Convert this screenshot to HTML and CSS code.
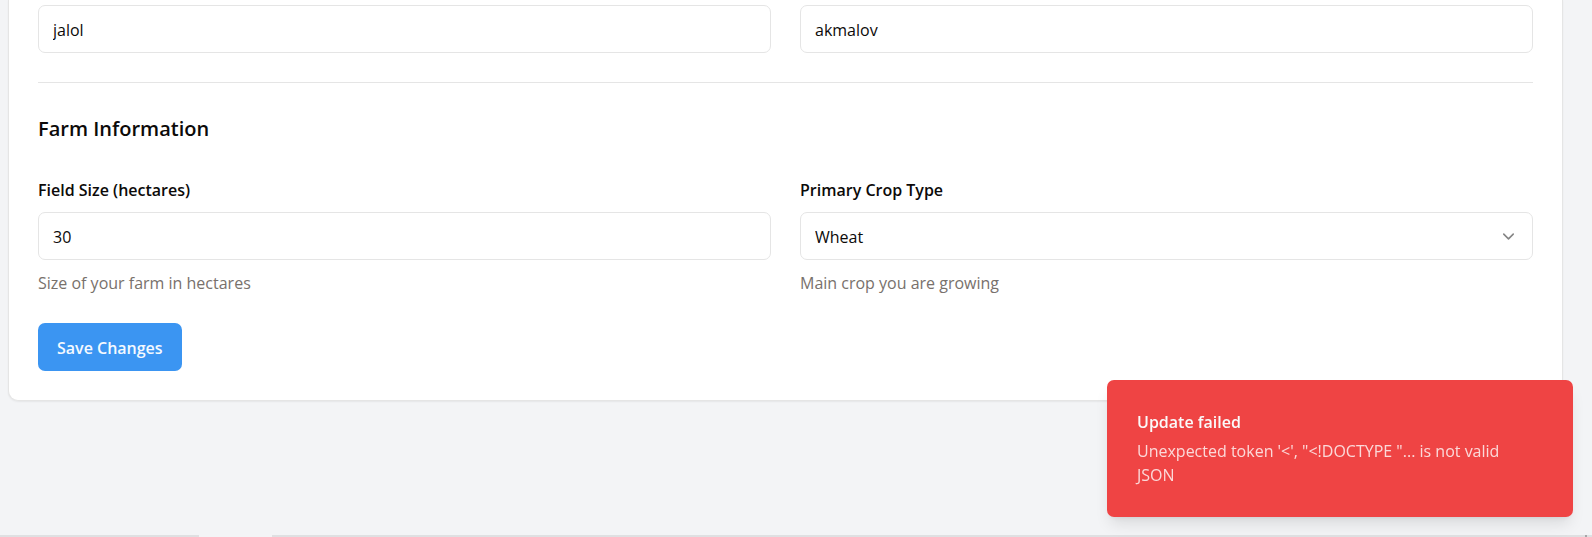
FILE: index.html
```html
<!DOCTYPE html>
<html lang="en">
<head>
<meta charset="utf-8">
<meta name="viewport" content="width=device-width, initial-scale=1">
<title>Profile settings</title>
<link rel="stylesheet" href="styles.css">
</head>
<body>
<main class="page">
  <form class="card">
    <div class="grid">
      <input class="control" type="text" value="jalol" aria-label="First name">
      <input class="control" type="text" value="akmalov" aria-label="Last name">
    </div>
    <hr class="divider">
    <h2 class="heading">Farm Information</h2>
    <div class="grid">
      <div class="field">
        <label class="label" for="size">Field Size (hectares)</label>
        <input class="control" id="size" type="text" inputmode="numeric" value="30" aria-describedby="size-help">
        <p class="help" id="size-help">Size of your farm in hectares</p>
      </div>
      <div class="field">
        <label class="label" for="crop">Primary Crop Type</label>
        <div class="select">
          <select class="control" id="crop" aria-describedby="crop-help"><option>Wheat</option></select>
          <svg class="chevron" viewBox="0 0 24 24" aria-hidden="true"><path d="m6 9 6 6 6-6"/></svg>
        </div>
        <p class="help" id="crop-help">Main crop you are growing</p>
      </div>
    </div>
    <button class="save" type="button">Save Changes</button>
  </form>
</main>
<div class="strip"><span class="strip-start"></span><span class="strip-end"></span><span class="strip-mark"></span><span class="strip-tail"></span></div>
<div class="toast" role="alert">
  <div class="toast-title">Update failed</div>
  <div class="toast-text">Unexpected token '&lt;', "&lt;!DOCTYPE "... is not valid JSON</div>
</div>
</body>
</html>
```

FILE: styles.css
```css
* { box-sizing: border-box; }

body {
  display: flex;
  flex-direction: column;
  min-height: 100vh;
  margin: 0;
  background: #f3f4f6;
  color: #0c0a09;
  font: 16px/24px "Segoe UI", "Open Sans", "Noto Sans", sans-serif;
}

.page { padding: 0 29px 0 8px; }

.card {
  padding: 5px 29px 29px;
  background: #fff;
  border: 1px solid #e5e5e5;
  border-top: 0;
  border-radius: 0 0 10px 10px;
  box-shadow: 0 1px 2px rgb(0 0 0 / 6%);
}

.grid {
  display: grid;
  grid-template-columns: 1fr 1fr;
  gap: 29px;
}

.control {
  display: block;
  width: 100%;
  height: 48px;
  padding: 2px 14px 0;
  border: 1px solid #e5e5e5;
  border-radius: 7px;
  background: #fff;
  color: inherit;
  font: inherit;
  appearance: none;
}

.divider {
  height: 1px;
  margin: 29px 0;
  border: 0;
  background: #e5e5e5;
}

.heading {
  margin: 0 0 32px;
  font-size: 20px;
  font-weight: 600;
  line-height: 34px;
}

.label {
  display: block;
  margin-bottom: 10px;
  font-weight: 600;
}

.help {
  margin: 11px 0 0;
  color: #78716c;
}

.select { position: relative; }

.chevron {
  position: absolute;
  top: 15px;
  right: 15px;
  width: 19px;
  height: 19px;
  fill: none;
  stroke: #858585;
  stroke-width: 2;
  stroke-linecap: round;
  stroke-linejoin: round;
  pointer-events: none;
}

.save {
  height: 48px;
  margin-top: 28px;
  padding: 2px 19px 0;
  border: 0;
  border-radius: 7px;
  background: #3b95f2;
  color: #f4f9ff;
  font: inherit;
  font-weight: 600;
}

.strip {
  display: flex;
  height: 2px;
  margin-top: auto;
}

.strip-start { width: 199px; background: #dfe0e2; }
.strip-end { flex: 1; margin-left: 73px; background: #dfe0e2; }
.strip-mark { width: 2px; background: #a5a6a8; }
.strip-tail { width: 5px; background: #dfe0e2; }

.toast {
  position: fixed;
  right: 19px;
  bottom: 20px;
  width: 466px;
  padding: 30px 48px 30px 30px;
  border-radius: 7px;
  background: #ef4444;
  color: #fafafa;
  box-shadow: 0 10px 15px -3px rgb(0 0 0 / 10%), 0 4px 6px -4px rgb(0 0 0 / 10%);
}

.toast-title { margin-bottom: 5px; font-weight: 600; }
.toast-text { color: #fbd9d9; }
```
